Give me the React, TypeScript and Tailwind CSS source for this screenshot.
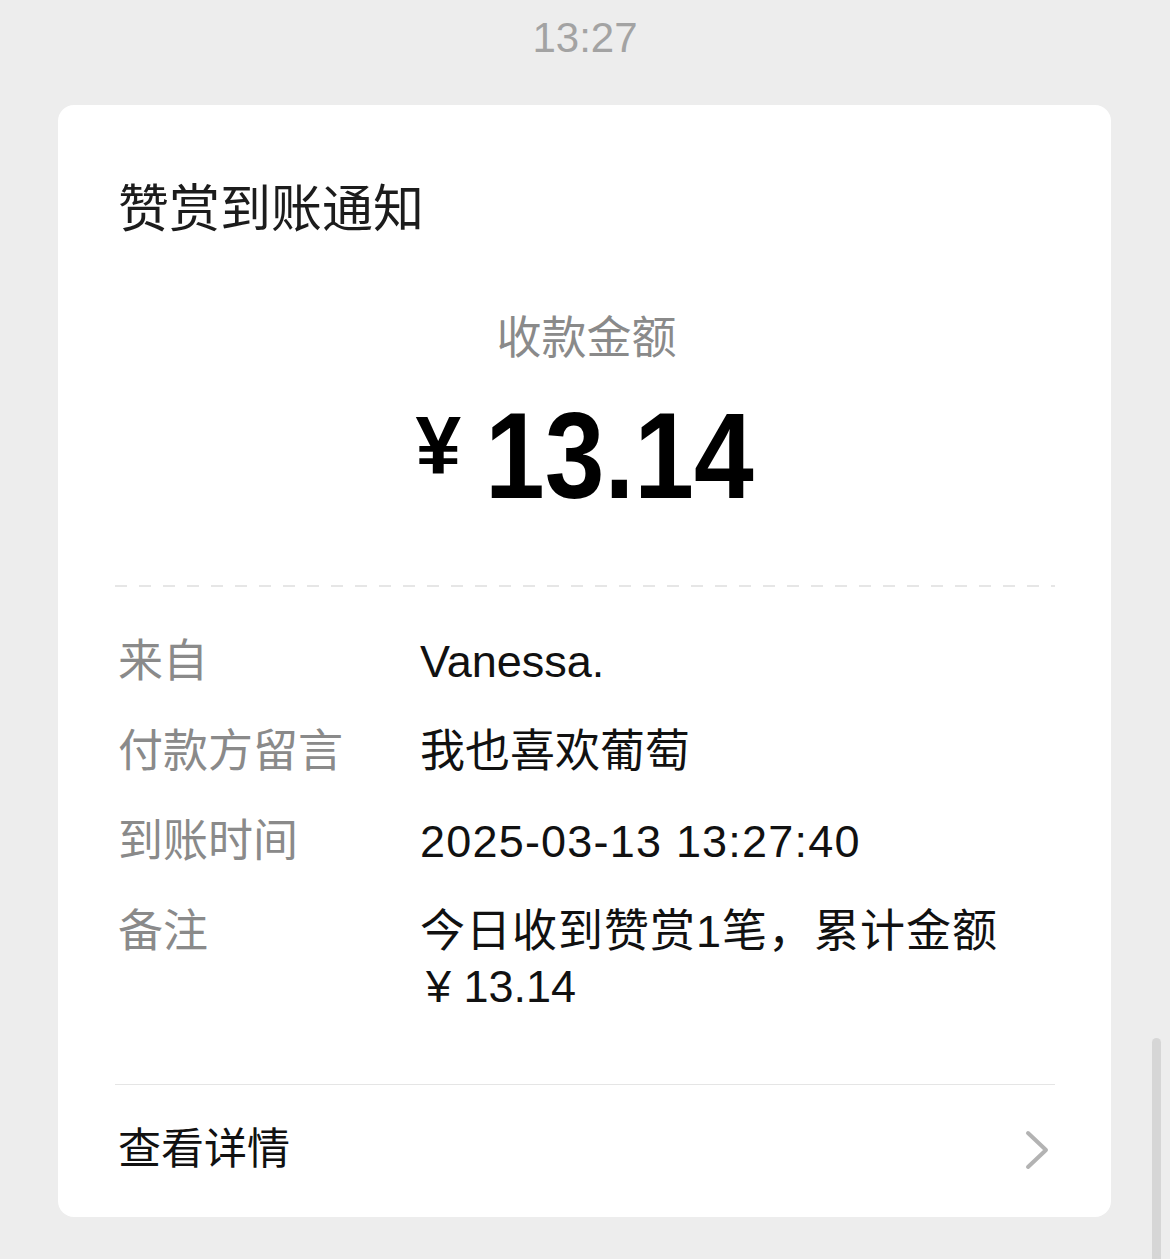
import type { ReactNode } from 'react'

const rows: { label: string; value: ReactNode }[] = [
  { label: '来自', value: 'Vanessa.' },
  { label: '付款方留言', value: '我也喜欢葡萄' },
  { label: '到账时间', value: <span className="tracking-[1.2px]">2025-03-13 13:27:40</span> },
  {
    label: '备注',
    value: (
      <>
        <div className="tracking-[1px]">今日收到赞赏1笔，累计金额</div>
        <div className="pl-[6px]">¥ 13.14</div>
      </>
    ),
  },
]

export default function App() {
  return (
    <div
      className="relative min-h-[1259px] overflow-hidden bg-[#ededed]"
      style={{ fontFamily: '"Liberation Sans", "Noto Sans CJK SC", sans-serif' }}
    >
      <div className="h-[105px] pt-[14px] text-center text-[42px] leading-[48px] text-[#a3a3a3]">13:27</div>

      <div className="mx-[58px] mr-[59px] rounded-[16px] bg-white pl-[60px] pr-[56px]">
        <h1 className="pt-[75px] text-[51px] leading-[60px] font-normal text-[#1c1c1c]">赞赏到账通知</h1>

        <div className="mt-[71px] text-center text-[45px] leading-[56px] text-[#8a8a8a]">收款金额</div>

        <div className="mt-[24px] flex items-start justify-center pr-[4px]">
          <span className="mt-[13px] mr-[24px] text-[82px] leading-none font-bold text-black">¥</span>
          <span className="mr-[-37px] inline-block origin-left scale-x-[0.88] text-[122px] leading-[130px] font-bold text-black">
            13.14
          </span>
        </div>

        <div className="mt-[64px] -ml-[3px] h-[2px] bg-[repeating-linear-gradient(90deg,#e6e6e6_0_12px,transparent_12px_24px)]" />

        <div className="mt-[47px] flex flex-col gap-[35px]">
          {rows.map((row) => (
            <div key={row.label} className="flex text-[45px] leading-[55px]">
              <div className="w-[302px] shrink-0 text-[#8a8a8a]">{row.label}</div>
              <div className="text-[#111]">{row.value}</div>
            </div>
          ))}
        </div>

        <div className="mt-[70px] -ml-[3px] h-px bg-[#e5e5e5]" />

        <div className="flex items-center justify-between pt-[37px] pb-[40px]">
          <span className="text-[43px] leading-[55px] text-[#111]">查看详情</span>
          <svg width="26" height="42" viewBox="0 0 26 42" className="mr-[5px]" fill="none">
            <polyline
              points="4,4 22,21 4,38"
              stroke="#b3b3b3"
              strokeWidth="4"
              strokeLinecap="round"
              strokeLinejoin="round"
            />
          </svg>
        </div>
      </div>

      <div className="absolute top-[1038px] left-[1152px] h-[230px] w-[9px] rounded-full bg-[#d6d6d6]" />
    </div>
  )
}
